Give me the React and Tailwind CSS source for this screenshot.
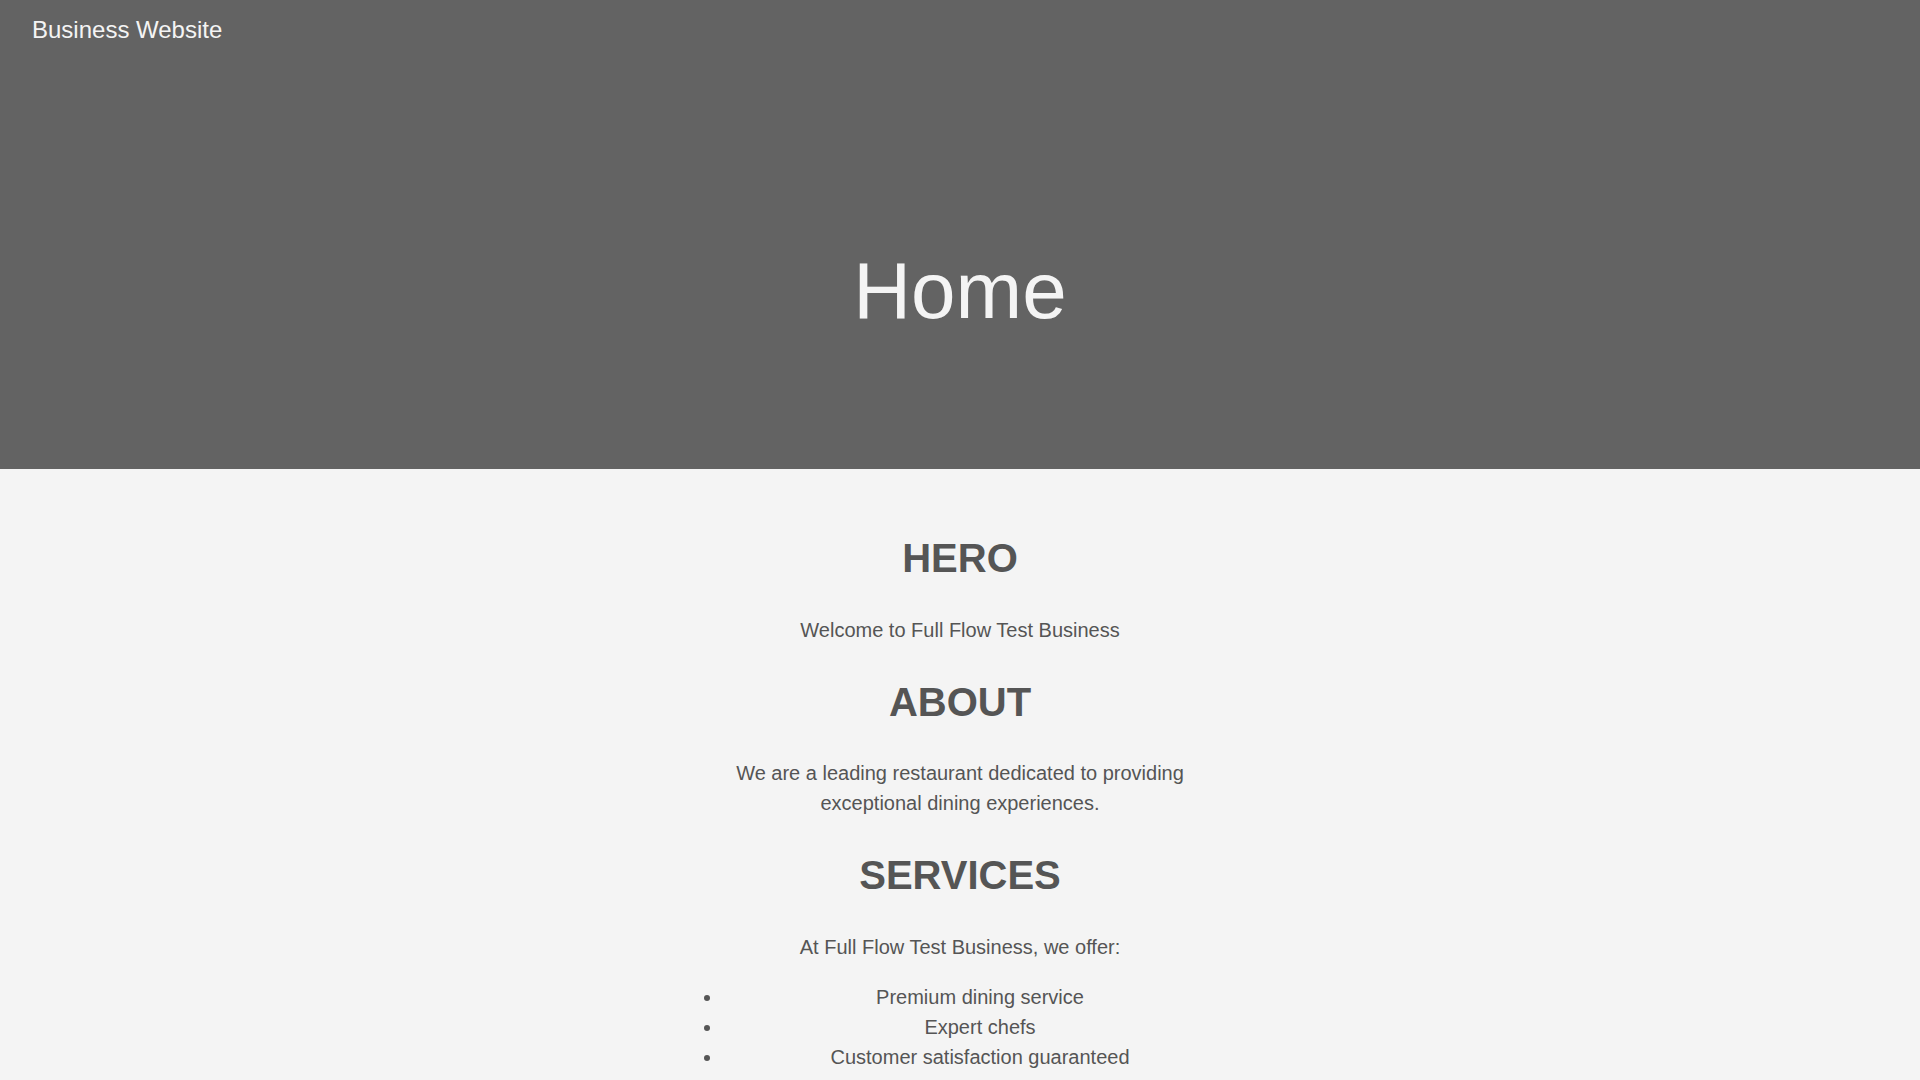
export default function App() {
  return (
    <div className="min-h-screen bg-[#f4f4f4] text-[#555555]" style={{ fontFamily: '"Liberation Sans", Arial, sans-serif' }}>
      <header className="h-[469px] bg-[#636363] text-[#f4f4f4] flex flex-col">
        <nav className="pt-4 pl-8">
          <span className="text-[24px] leading-[28px] block">Business Website</span>
        </nav>
        <h1 className="mt-[201px] text-center text-[80px] leading-[92px] font-normal">Home</h1>
      </header>
      <main className="pt-[66px] pb-10 text-center">
        <h2 className="text-[40px] leading-[46px] font-bold mb-[33.5px]">HERO</h2>
        <p className="text-[20px] leading-[30px] mb-[34px]">Welcome to Full Flow Test Business</p>
        <h2 className="text-[40px] leading-[46px] font-bold mb-[33px]">ABOUT</h2>
        <p className="text-[20px] leading-[30px] mb-[34px] mx-auto max-w-[500px]">
          We are a leading restaurant dedicated to providing exceptional dining experiences.
        </p>
        <h2 className="text-[40px] leading-[46px] font-bold mb-[34.5px]">SERVICES</h2>
        <p className="text-[20px] leading-[30px] mb-5">At Full Flow Test Business, we offer:</p>
        <ul className="mx-auto w-[554px] pl-10 list-disc text-[20px] leading-[30px]">
          <li>Premium dining service</li>
          <li>Expert chefs</li>
          <li>Customer satisfaction guaranteed</li>
        </ul>
      </main>
    </div>
  );
}
